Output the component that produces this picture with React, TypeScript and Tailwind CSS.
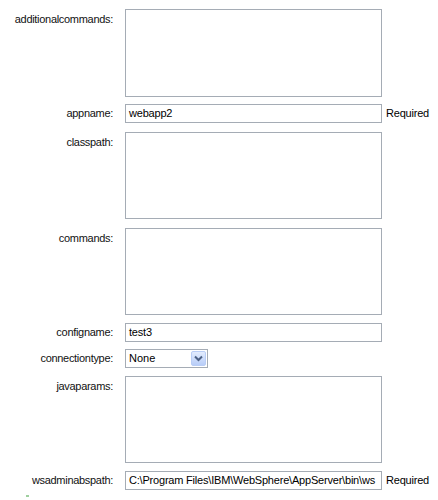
import React from "react";

const font = { fontFamily: '"Liberation Sans", Tahoma, Arial, sans-serif' };

function Label({ text, top }: { text: string; top?: boolean }) {
  return (
    <div
      className={
        "w-[125px] shrink-0 pr-[12px] text-right text-[11px] leading-[13px] tracking-[-0.3px] text-[#111] " +
        (top ? "pt-[4px]" : "self-center")
      }
    >
      {text}
    </div>
  );
}

function Area({ label, h, mt }: { label: string; h: string; mt: string }) {
  return (
    <div className={"flex " + mt}>
      <Label text={label} top />
      <div className={"w-[257px] shrink-0 border border-[#a5acb5] bg-white " + h} />
    </div>
  );
}

function Field({ label, value, mt, required }: { label: string; value: string; mt: string; required?: boolean }) {
  return (
    <div className={"flex " + mt}>
      <Label text={label} />
      <div className="h-[19px] w-[257px] shrink-0 overflow-hidden border border-[#a5acb5] bg-white">
        <div className="whitespace-nowrap pl-[3px] text-[11px] leading-[17px] tracking-[-0.2px] text-black">
          {value}
        </div>
      </div>
      {required && (
        <div className="shrink-0 self-center pl-[4px] text-[11px] tracking-[-0.2px] text-black">Required</div>
      )}
    </div>
  );
}

export default function App() {
  return (
    <div className="h-[500px] w-[438px] overflow-hidden bg-white pt-[9px]" style={font}>
      <Area label="additionalcommands:" h="h-[88px]" mt="" />
      <Field label="appname:" value="webapp2" mt="mt-[7px]" required />
      <Area label="classpath:" h="h-[87px]" mt="mt-[9px]" />
      <Area label="commands:" h="h-[87px]" mt="mt-[9px]" />
      <Field label="configname:" value="test3" mt="mt-[8px]" />
      <div className="mt-[7px] flex">
        <Label text="connectiontype:" />
        <div className="flex h-[19px] w-[83px] shrink-0 items-center justify-between border border-[#a5acb5] bg-white pl-[3px] text-[11px] text-black">
          <span>None</span>
          <div className="mr-[1px] flex h-[15px] w-[15px] items-center justify-center rounded-[2px] border border-[#b9cdf6] bg-gradient-to-b from-[#e3ecfd] to-[#b8cdf8]">
            <svg width="9" height="7" viewBox="0 0 9 7">
              <path d="M1 1.5 L4.5 5 L8 1.5" fill="none" stroke="#4d6185" strokeWidth="2" />
            </svg>
          </div>
        </div>
      </div>
      <Area label="javaparams:" h="h-[87px]" mt="mt-[8px]" />
      <Field
        label="wsadminabspath:"
        value="C:\Program Files\IBM\WebSphere\AppServer\bin\ws"
        mt="mt-[8px]"
        required
      />
      <div className="ml-[26px] mt-[5px] h-[2px] w-[3px] bg-[#9fd09f]" />
    </div>
  );
}
